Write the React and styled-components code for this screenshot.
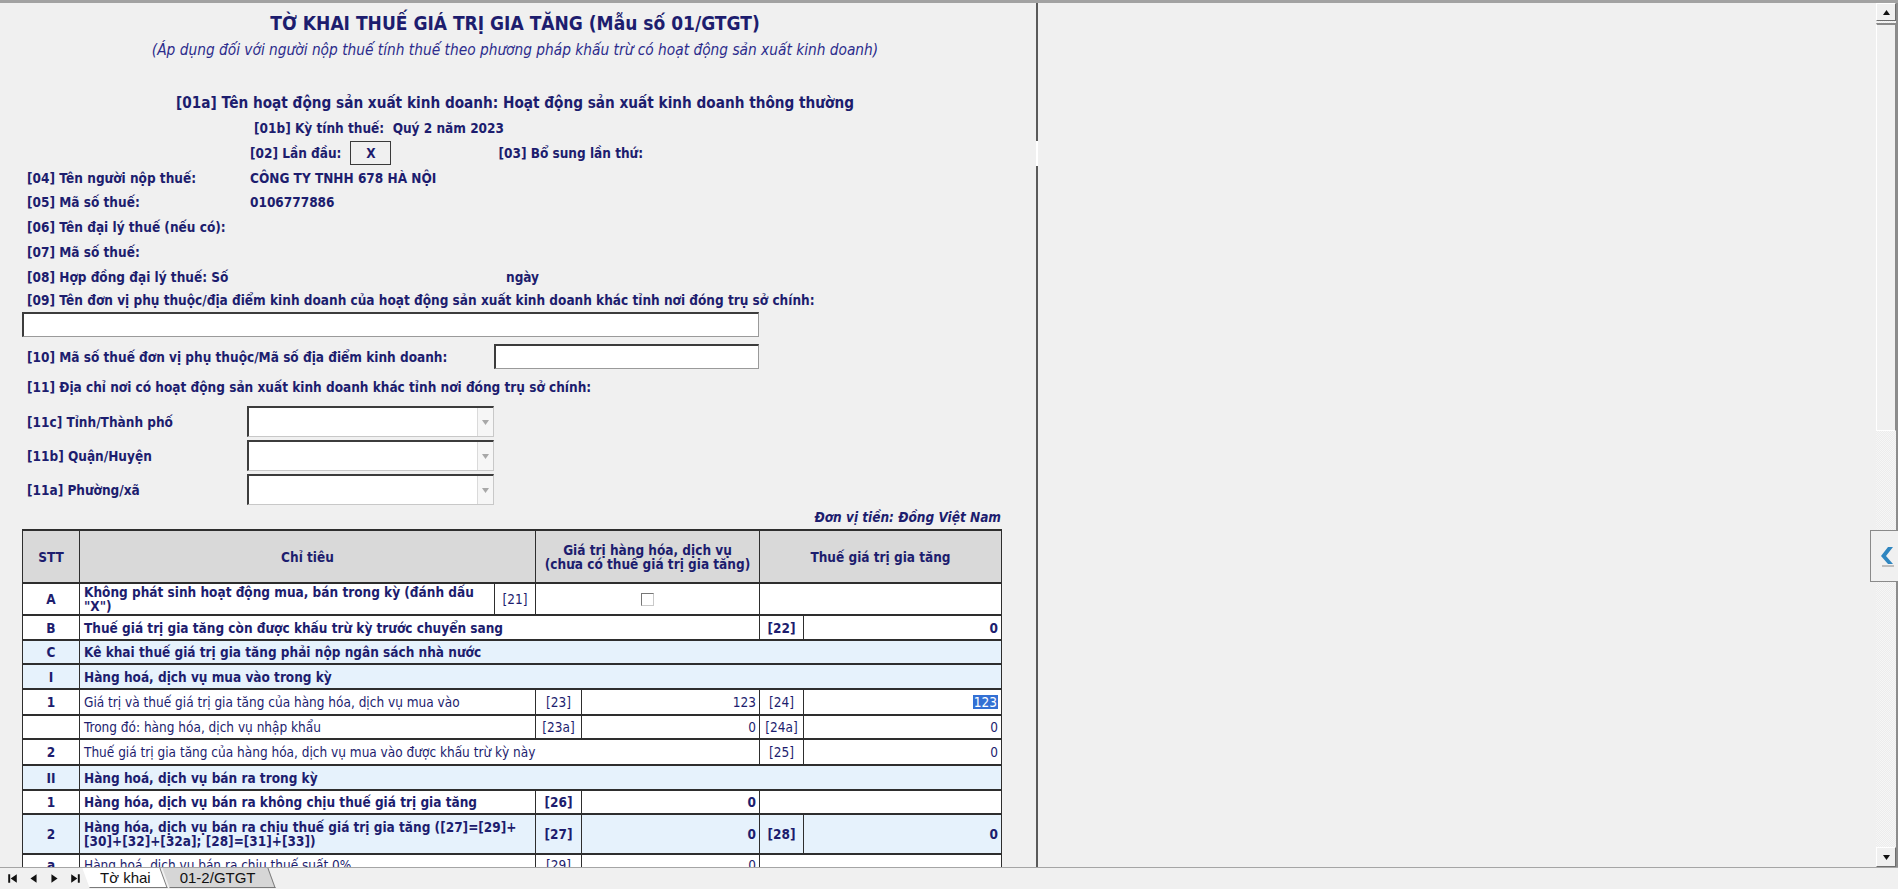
import React from "react";
import styled, { createGlobalStyle } from "styled-components";

const FONT = `"DejaVu Sans Condensed", "DejaVu Sans", sans-serif`;
const NAVY = "#1d1d6e";
const LINE = "#2e2e2e";

const GlobalStyle = createGlobalStyle`
  html, body { margin: 0; padding: 0; background: #f0f0f0; overflow: hidden; }
  body { font-family: ${FONT}; font-stretch: condensed; }
  * { box-sizing: border-box; }
`;

const Screen = styled.div`
  width: 1898px;
  height: 889px;
  display: flex;
  flex-direction: column;
  background: #f0f0f0;
  overflow: hidden;
`;
const TopRule = styled.div`
  height: 3px;
  flex: none;
  background: #a2a2a2;
`;
const Workspace = styled.div`
  flex: 1;
  min-height: 0;
  display: flex;
  position: relative;
`;
const Sheet = styled.div`
  width: 1036px;
  flex: none;
  overflow: hidden;
  color: ${NAVY};
  display: flex;
  flex-direction: column;
  & > * {
    flex: none;
  }
`;
const Splitter = styled.div`
  width: 2px;
  flex: none;
  background: linear-gradient(#5a5a5a 0 138px, #ffffff 138px 163px, #5a5a5a 163px);
`;
const Blank = styled.div`
  flex: 1;
`;

/* ---------- header texts ---------- */
const Title = styled.div`
  width: 1030px;
  margin-top: 7px;
  text-align: center;
  font-size: 19px;
  line-height: 26px;
  font-weight: bold;
`;
const SubTitle = styled.div`
  width: 1030px;
  margin-top: 5px;
  text-align: center;
  font-size: 15.3px;
  line-height: 18px;
  font-style: italic;
  color: #2c2c8c;
`;
const Center = styled.div`
  width: 1030px;
  margin-top: 32px;
  height: 24px;
  display: flex;
  align-items: center;
  justify-content: center;
  font-size: 15.2px;
  font-weight: bold;
`;

/* ---------- form lines ---------- */
const Line = styled.div`
  height: ${(p) => p.h || 25}px;
  margin-top: ${(p) => p.mt || 0}px;
  padding-left: ${(p) => p.pl || 27}px;
  display: flex;
  align-items: center;
  font-size: 13.5px;
  font-weight: bold;
  white-space: nowrap;
`;
const Label = styled.span`
  width: ${(p) => (p.w ? p.w + "px" : "auto")};
  margin-left: ${(p) => p.ml || 0}px;
  flex: none;
`;
const Value = styled.span`
  flex: none;
`;
const MarkBox = styled.span`
  width: 41px;
  height: 24px;
  margin: 0 6px 0 9px;
  border: 1px solid #3a3a3a;
  display: flex;
  align-items: center;
  justify-content: center;
  background: #f0f0f0;
`;
const TextBox = styled.div`
  width: ${(p) => p.w}px;
  height: 25px;
  background: #fff;
  border: 1px solid #9a9a9a;
  border-top: 2px solid #3c3c3c;
  border-left: 2px solid #3c3c3c;
  flex: none;
`;
const Select = styled.div`
  width: 247px;
  height: 31px;
  background: #fff;
  border: 1px solid #c8c8c8;
  border-top: 2px solid #3c3c3c;
  border-left: 2px solid #3c3c3c;
  display: flex;
  justify-content: flex-end;
  flex: none;
`;
const Drop = styled.div`
  width: 16px;
  border-left: 1px solid #dadada;
  background: #f6f6f6;
  display: flex;
  align-items: center;
  justify-content: center;
`;
const Money = styled.div`
  width: 1001px;
  margin-top: 3px;
  height: 18px;
  text-align: right;
  font-size: 13.5px;
  font-weight: bold;
  font-style: italic;
  line-height: 18px;
`;

/* ---------- table ---------- */
const Table = styled.div`
  width: 980px;
  margin-left: 22px;
  margin-top: 3px;
  border-top: 2px solid ${LINE};
  border-left: 1px solid ${LINE};
`;
const Row = styled.div`
  display: grid;
  grid-template-columns: ${(p) => p.cols.map((c) => c + "px").join(" ")};
  height: ${(p) => p.h}px;
  border-bottom: 2px solid ${LINE};
  background: ${(p) => (p.tone === "head" ? "#d9d9d9" : p.tone === "blue" ? "#e6f2fc" : "#ffffff")};
  font-size: 13.5px;
  font-weight: ${(p) => (p.plain ? "normal" : "bold")};
  line-height: 14px;
  overflow: hidden;
`;
const Cell = styled.div`
  border-right: 1px solid ${LINE};
  display: flex;
  align-items: ${(p) => (p.top ? "flex-start" : "center")};
  padding: ${(p) => (p.top ? "3px" : "0")} ${(p) => (p.num ? 3 : 4)}px 0;
  justify-content: ${(p) => (p.num ? "flex-end" : p.center ? "center" : "flex-start")};
  text-align: ${(p) => (p.center ? "center" : "left")};
  font-weight: ${(p) => (p.strong ? "bold" : "inherit")};
  overflow: hidden;
`;
const Ref = styled(Cell)`
  justify-content: center;
  padding-left: 0;
  padding-right: 0;
`;
const Check = styled.span`
  width: 13px;
  height: 13px;
  background: #fff;
  border: 1px solid #c9c9c9;
  border-top-color: #777;
  border-left-color: #777;
`;
const Picked = styled.span`
  background: #3370d4;
  color: #fff;
  padding: 0 1px;
`;

/* ---------- right scroller ---------- */
const VScroll = styled.div`
  width: 22px;
  flex: none;
  display: flex;
  flex-direction: column;
  background: repeating-conic-gradient(#f6f6f6 0 25%, #ececec 0 50%) 0 0 / 2px 2px;
  border-right: 2px solid #8c8c8c;
`;
const ScrollBtn = styled.div`
  height: ${(p) => p.h}px;
  flex: none;
  background: #f0f0f0;
  border: 1px solid #fff;
  border-right-color: #6e6e6e;
  border-bottom-color: #6e6e6e;
  display: flex;
  align-items: center;
  justify-content: center;
`;
const Thumb = styled.div`
  height: 408px;
  margin-top: 2px;
  flex: none;
  background: #f0f0f0;
  border: 1px solid #fff;
  border-right-color: #8a8a8a;
  border-top: 2px solid #8a8a8a;
`;
const Fill = styled.div`
  flex: 1;
`;
const Collapse = styled.div`
  position: absolute;
  right: 0;
  top: 527px;
  width: 28px;
  height: 52px;
  background: #f0f0f0;
  border: 1px solid #8a8a8a;
  border-right: none;
  display: flex;
  align-items: center;
  justify-content: center;
  padding-left: 4px;
`;

/* ---------- bottom tabs ---------- */
const TabBar = styled.div`
  height: 22px;
  flex: none;
  border-top: 1px solid #a5a5a5;
  display: flex;
  align-items: flex-start;
  padding-left: 2px;
  font-family: "Liberation Sans", sans-serif;
  position: relative;
  z-index: 3;
  background: #f0f0f0;
`;
const NavBtn = styled.div`
  width: 21px;
  height: 20px;
  display: flex;
  align-items: center;
  justify-content: center;
`;
const Tab = styled.div`
  position: relative;
  height: 20px;
  padding: 0 ${(p) => (p.active ? 19 : 22)}px 0 14px;
  margin-left: ${(p) => (p.active ? 0 : -4)}px;
  font-size: 15px;
  line-height: 20px;
  color: #111;
  z-index: ${(p) => (p.active ? 2 : 1)};
  &::before {
    content: "";
    position: absolute;
    inset: 0 6px 0 0;
    background: ${(p) => (p.active ? "#ffffff" : "#d6d6d6")};
    border-right: 1px solid #7a7a7a;
    border-bottom: 1px solid #7a7a7a;
    transform: skewX(20deg);
    z-index: -1;
  }
`;

const Tri = ({ d, s = 9 }) => (
  <svg width={s} height={s} viewBox="0 0 9 9">
    <path d={d} fill="#111" />
  </svg>
);

const DropArrow = () => (
  <svg width="7" height="5" viewBox="0 0 7 5">
    <path d="M0 0h7L3.5 5z" fill="#a8a8a8" />
  </svg>
);

const MAIN6 = [57, 456, 46, 178, 44, 198];
const MAIN5 = [57, 456, 46, 178, 242];
const SPAN4 = [57, 680, 44, 198];
const FULL = [57, 922];

export default function App() {
  return (
    <Screen>
      <GlobalStyle />
      <TopRule />
      <Workspace>
        <Sheet>
          <Title>TỜ KHAI THUẾ GIÁ TRỊ GIA TĂNG (Mẫu số 01/GTGT)</Title>
          <SubTitle>
            (Áp dụng đối với người nộp thuế tính thuế theo phương pháp khấu trừ có hoạt động sản xuất kinh doanh)
          </SubTitle>
          <Center>[01a] Tên hoạt động sản xuất kinh doanh: Hoạt động sản xuất kinh doanh thông thường</Center>
          <Line pl={254} h={25} mt={0}>
            <Label>[01b] Kỳ tính thuế:&nbsp;&nbsp;</Label>
            <Value>Quý 2 năm 2023</Value>
          </Line>
          <Line pl={250} h={24} mt={1}>
            <Label>[02] Lần đầu:</Label>
            <MarkBox>X</MarkBox>
            <Label ml={101}>[03] Bổ sung lần thứ:</Label>
          </Line>
          <Line>
            <Label w={223}>[04] Tên người nộp thuế:</Label>
            <Value>CÔNG TY TNHH 678 HÀ NỘI</Value>
          </Line>
          <Line h={24}>
            <Label w={223}>[05] Mã số thuế:</Label>
            <Value>0106777886</Value>
          </Line>
          <Line>
            <Label>[06] Tên đại lý thuế (nếu có):</Label>
          </Line>
          <Line>
            <Label>[07] Mã số thuế:</Label>
          </Line>
          <Line>
            <Label w={479}>[08] Hợp đồng đại lý thuế: Số</Label>
            <Value>ngày</Value>
          </Line>
          <Line h={22}>
            <Label>[09] Tên đơn vị phụ thuộc/địa điểm kinh doanh của hoạt động sản xuất kinh doanh khác tỉnh nơi đóng trụ sở chính:</Label>
          </Line>
          <Line pl={22} mt={1}>
            <TextBox w={737} />
          </Line>
          <Line mt={7}>
            <Label w={467}>[10] Mã số thuế đơn vị phụ thuộc/Mã số địa điểm kinh doanh:</Label>
            <TextBox w={265} />
          </Line>
          <Line h={24} mt={6}>
            <Label>[11] Địa chỉ nơi có hoạt động sản xuất kinh doanh khác tỉnh nơi đóng trụ sở chính:</Label>
          </Line>
          {["[11c] Tỉnh/Thành phố", "[11b] Quận/Huyện", "[11a] Phường/xã"].map((t, i) => (
            <Line key={t} h={31} mt={i === 0 ? 7 : 3}>
              <Label w={220}>{t}</Label>
              <Select>
                <Drop>
                  <DropArrow />
                </Drop>
              </Select>
            </Line>
          ))}
          <Money>Đơn vị tiền: Đồng Việt Nam</Money>

          <Table>
            <Row tone="head" h={53} cols={[57, 456, 224, 242]}>
              <Cell center>STT</Cell>
              <Cell center>Chỉ tiêu</Cell>
              <Cell center>
                Giá trị hàng hóa, dịch vụ
                <br />
                (chưa có thuế giá trị gia tăng)
              </Cell>
              <Cell center>Thuế giá trị gia tăng</Cell>
            </Row>
            <Row h={32} cols={[57, 415, 41, 224, 242]}>
              <Cell center>A</Cell>
              <Cell>Không phát sinh hoạt động mua, bán trong kỳ (đánh dấu "X")</Cell>
              <Ref style={{ fontWeight: "normal" }}>[21]</Ref>
              <Cell center>
                <Check />
              </Cell>
              <Cell />
            </Row>
            <Row h={25} cols={SPAN4}>
              <Cell center>B</Cell>
              <Cell>Thuế giá trị gia tăng còn được khấu trừ kỳ trước chuyển sang</Cell>
              <Ref>[22]</Ref>
              <Cell num>0</Cell>
            </Row>
            <Row tone="blue" h={24} cols={FULL}>
              <Cell center>C</Cell>
              <Cell>Kê khai thuế giá trị gia tăng phải nộp ngân sách nhà nước</Cell>
            </Row>
            <Row tone="blue" h={25} cols={FULL}>
              <Cell center>I</Cell>
              <Cell>Hàng hoá, dịch vụ mua vào trong kỳ</Cell>
            </Row>
            <Row plain h={26} cols={MAIN6}>
              <Cell center strong>1</Cell>
              <Cell>Giá trị và thuế giá trị gia tăng của hàng hóa, dịch vụ mua vào</Cell>
              <Ref>[23]</Ref>
              <Cell num>123</Cell>
              <Ref>[24]</Ref>
              <Cell num>
                <Picked>123</Picked>
              </Cell>
            </Row>
            <Row plain h={24} cols={MAIN6}>
              <Cell />
              <Cell>Trong đó: hàng hóa, dịch vụ nhập khẩu</Cell>
              <Ref>[23a]</Ref>
              <Cell num>0</Cell>
              <Ref>[24a]</Ref>
              <Cell num>0</Cell>
            </Row>
            <Row plain h={26} cols={SPAN4}>
              <Cell center strong>2</Cell>
              <Cell>Thuế giá trị gia tăng của hàng hóa, dịch vụ mua vào được khấu trừ kỳ này</Cell>
              <Ref>[25]</Ref>
              <Cell num>0</Cell>
            </Row>
            <Row tone="blue" h={25} cols={FULL}>
              <Cell center>II</Cell>
              <Cell>Hàng hoá, dịch vụ bán ra trong kỳ</Cell>
            </Row>
            <Row h={24} cols={MAIN5}>
              <Cell center>1</Cell>
              <Cell>Hàng hóa, dịch vụ bán ra không chịu thuế giá trị gia tăng</Cell>
              <Ref>[26]</Ref>
              <Cell num>0</Cell>
              <Cell />
            </Row>
            <Row tone="blue" h={40} cols={MAIN6}>
              <Cell center>2</Cell>
              <Cell>Hàng hóa, dịch vụ bán ra chịu thuế giá trị gia tăng ([27]=[29]+ [30]+[32]+[32a]; [28]=[31]+[33])</Cell>
              <Ref>[27]</Ref>
              <Cell num>0</Cell>
              <Ref>[28]</Ref>
              <Cell num>0</Cell>
            </Row>
            <Row plain h={30} cols={MAIN5}>
              <Cell center strong top>a</Cell>
              <Cell top>Hàng hoá, dịch vụ bán ra chịu thuế suất 0%</Cell>
              <Ref top>[29]</Ref>
              <Cell num top>0</Cell>
              <Cell />
            </Row>
          </Table>
        </Sheet>
        <Splitter />
        <Blank />
        <VScroll>
          <ScrollBtn h={18}>
            <Tri d="M4.5 2L8 7H1z" />
          </ScrollBtn>
          <Thumb />
          <Fill />
          <ScrollBtn h={20}>
            <Tri d="M1 2h7L4.5 7z" />
          </ScrollBtn>
        </VScroll>
        <Collapse>
          <svg width="16" height="22" viewBox="0 0 16 22">
            <path d="M14 2L7 11l7 8H9L2 11l7-9z" fill="#2f86c0" />
            <path d="M3 21h12" stroke="#8a8a8a" strokeWidth="1" />
          </svg>
        </Collapse>
      </Workspace>
      <TabBar>
        <NavBtn>
          <Tri s={11} d="M1 1h1.6v7H1zM8 1v7L3 4.5z" />
        </NavBtn>
        <NavBtn>
          <Tri s={11} d="M7 1v7L2 4.5z" />
        </NavBtn>
        <NavBtn>
          <Tri s={11} d="M2 1v7l5-3.5z" />
        </NavBtn>
        <NavBtn>
          <Tri s={11} d="M1 1v7l5-3.5zM6.4 1H8v7H6.4z" />
        </NavBtn>
        <Tab active>Tờ khai</Tab>
        <Tab>01-2/GTGT</Tab>
      </TabBar>
    </Screen>
  );
}
